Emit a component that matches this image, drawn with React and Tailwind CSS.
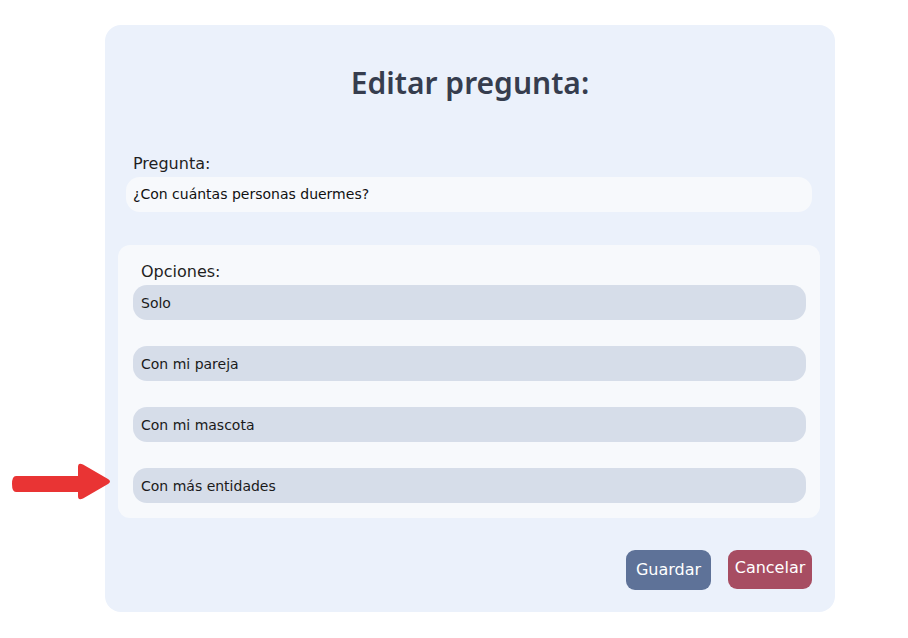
export default function App() {
  const options = ["Solo", "Con mi pareja", "Con mi mascota", "Con más entidades"];
  return (
    <div className="relative w-[908px] h-[638px] bg-white" style={{ fontFamily: '"DejaVu Sans", "Noto Sans", sans-serif' }}>
      <div className="absolute left-[12px] top-[463px]">
        <svg width="100" height="38" viewBox="0 0 100 38">
          <path d="M4 13 L66 13 L66 4 Q66 -1 71 1.5 L96 16 Q100 18.5 96 21 L71 35.5 Q66 38 66 33 L66 29 L4 29 Q0 29 0 21 Q0 13 4 13 Z" fill="#e93434" />
        </svg>
      </div>
      <div className="ml-[105px] pt-[25px]">
        <div className="w-[730px] h-[587px] bg-[#ebf1fb] rounded-[16px] flex flex-col">
          <h1 className="text-center text-[30px] font-semibold text-[#363d4e] mt-[43px] leading-none" style={{ fontFamily: '"Noto Sans", sans-serif' }}>Editar pregunta:</h1>
          <div className="mt-[58px] ml-[28px] text-[16px] text-[#1f1f1f] leading-none">Pregunta:</div>
          <div className="mt-[5px] ml-[21px] w-[686px] h-[35px] rounded-[14px] bg-[#f7f9fc] flex items-center pl-[7px] text-[14px] text-[#111]">
            ¿Con cuántas personas duermes?
          </div>
          <div className="mt-[33px] ml-[13px] w-[702px] h-[273px] rounded-[12px] bg-[#f7f9fc] pt-[19px] pl-[15px]">
            <div className="ml-[8px] text-[16px] text-[#1f1f1f] leading-none">Opciones:</div>
            <div className="mt-[5px] flex flex-col gap-[26px]">
              {options.map((o) => (
                <div key={o} className="w-[673px] h-[35px] rounded-[14px] bg-[#d6dde9] flex items-center pl-[8px] pt-[1px] text-[14px] text-[#1a1a1a]">
                  {o}
                </div>
              ))}
            </div>
          </div>
          <div className="mt-[32px] flex justify-end gap-[17px] pr-[23px]">
            <button className="w-[85px] h-[40px] rounded-[9px] bg-[#5e7298] text-white text-[16px]">Guardar</button>
            <button className="w-[84px] h-[39px] rounded-[9px] bg-[#a74d62] text-white text-[16px] pb-[3px]">Cancelar</button>
          </div>
        </div>
      </div>
    </div>
  );
}
